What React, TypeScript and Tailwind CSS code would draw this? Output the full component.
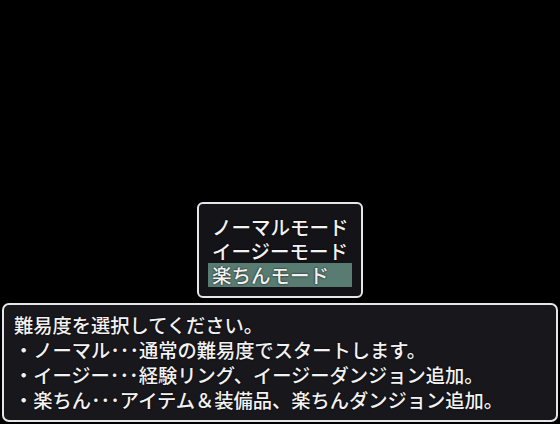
import React from 'react';

const menuItems = ['ノーマルモード', 'イージーモード', '楽ちんモード'];
const selected = 2;

const lines = [
  '難易度を選択してください。',
  '・ノーマル･･･通常の難易度でスタートします。',
  '・イージー･･･経験リング、イージーダンジョン追加。',
  '・楽ちん･･･アイテム＆装備品、楽ちんダンジョン追加。',
];

export default function App() {
  return (
    <div
      className="w-[560px] h-[424px] bg-black flex flex-col justify-end pb-[2px] text-[#f2f2f2]"
      style={{ fontFamily: '"Noto Sans CJK JP", "Noto Sans", sans-serif' }}
    >
      {/* command menu */}
      <div className="mx-auto w-[166px] border-2 border-[#e6e6e6] rounded-[6px] bg-[#141317] px-[9px] pt-[11px] pb-[9px]">
        {menuItems.map((item, i) => (
          <div
            key={item}
            className={`h-[24px] leading-[24px] text-[19.5px] font-medium pl-[4px] whitespace-nowrap [text-shadow:0_0_2px_#000] ${
              i === selected ? 'bg-[#587b72]' : ''
            }`}
          >
            {item}
          </div>
        ))}
      </div>

      {/* message window */}
      <div className="mt-[5px] mx-[2px] h-[119px] border-2 border-[#e6e6e6] rounded-[7px] bg-[#18171c] px-[10px] pt-[8px]">
        {lines.map(line => (
          <div key={line} className="text-[19.25px] font-medium leading-[25px] whitespace-nowrap [text-shadow:0_0_2px_#000]">
            {line}
          </div>
        ))}
      </div>
    </div>
  );
}
